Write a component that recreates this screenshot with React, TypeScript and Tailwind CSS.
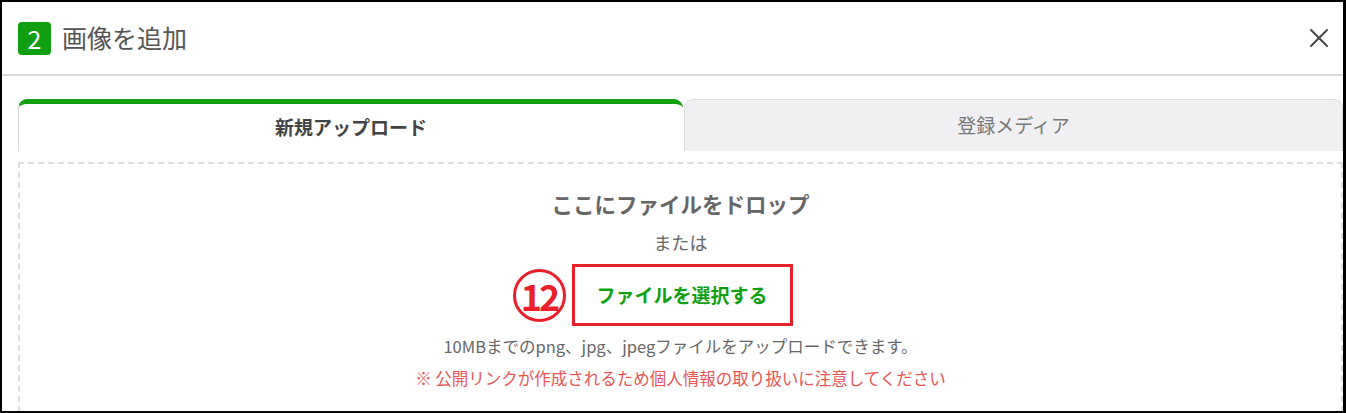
import { X } from "lucide-react";

const font = { fontFamily: '"Noto Sans CJK JP", "Noto Sans", sans-serif' };

function StepBadge({ n }: { n: number }) {
  return (
    <span className="flex h-[33px] w-[33px] items-center justify-center rounded-[4px] bg-[#0f9f10] text-[25px] leading-none text-white">
      {n}
    </span>
  );
}

// red circled annotation number
function Marker({ n }: { n: number }) {
  return (
    <span className="flex h-[53px] w-[53px] items-center justify-center rounded-full border-[3px] border-[#e8202a] text-[36px] font-bold leading-none tracking-[-3px] text-[#e8202a]">
      {n}
    </span>
  );
}

export default function App() {
  return (
    <div
      className="h-[413px] w-[1346px] overflow-hidden border-t-2 border-l-2 border-b-2 border-r-[3px] border-black bg-white"
      style={font}
    >
      <div className="flex h-[74px] items-center justify-between border-b-2 border-[#d9d9d9] pl-4 pr-[8px]">
        <div className="flex items-center gap-[11px]">
          <StepBadge n={2} />
          <h2 className="text-[25px] font-normal text-[#555]">画像を追加</h2>
        </div>
        <X size={32} strokeWidth={1.4} className="text-[#444]" />
      </div>

      <div className="pl-4 pt-[23px]">
        <div className="flex h-[52px]">
          <div className="flex w-[665px] items-center justify-center rounded-tl-[9px] rounded-tr-[9px] border-t-[5px] border-l border-[#0f9f10] border-l-[#d9d9d9] bg-white text-[19px] font-bold text-[#444]">
            新規アップロード
          </div>
          <div className="ml-[1px] flex flex-1 items-center justify-center rounded-tl-[9px] rounded-tr-[9px] border-t border-l border-r border-[#dcdcdc] bg-[#f0f0f2] text-[19px] text-[#777]">
            登録メディア
          </div>
        </div>

        <div className="mt-[11px] flex h-[260px] flex-col items-center border-2 border-dashed border-[#dddddd] pt-[24px]">
          <p className="text-[21.5px] font-bold leading-[32px] text-[#666]">ここにファイルをドロップ</p>
          <p className="mt-[9px] text-[18px] leading-[27px] text-[#666]">または</p>
          <div className="mt-[8px] flex items-center pl-[4px]">
            <div className="-ml-[60px] mr-[6px]">
              <Marker n={12} />
            </div>
            <button className="flex h-[62px] w-[221px] items-center justify-center border-[3px] border-[#e8202a] bg-white text-[19px] font-bold text-[#0f9f10]">
              ファイルを選択する
            </button>
          </div>
          <p className="mt-[8px] text-[16.5px] leading-[25px] text-[#666]">
            10MBまでのpng、jpg、jpegファイルをアップロードできます。
          </p>
          <p className="mt-[7px] text-[16.5px] leading-[25px] text-[#e85555]">
            ※ 公開リンクが作成されるため個人情報の取り扱いに注意してください
          </p>
        </div>
      </div>
    </div>
  );
}
